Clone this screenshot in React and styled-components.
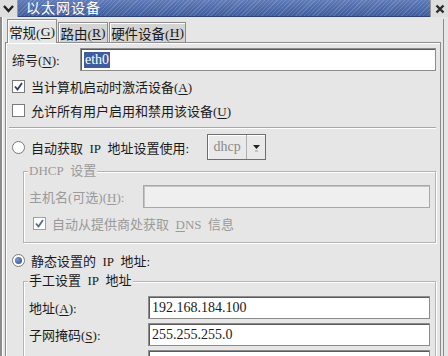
import React from "react";
import styled, { createGlobalStyle } from "styled-components";

const GlobalStyle = createGlobalStyle`
  html, body { margin: 0; padding: 0; background: #e6e6e6; }
  body { font-family: "Liberation Serif", "Noto Sans CJK SC", serif; }
`;

const Window = styled.div`
  width: 448px;
  height: 356px;
  overflow: hidden;
  background: #e6e6e6;
  font-size: 13px;
  color: #1a1a1a;
  display: flex;
  flex-direction: column;
`;

const TitleBar = styled.div`
  height: 17px;
  display: flex;
  flex: none;
`;

const TitleButton = styled.div`
  width: 17px;
  height: 17px;
  background: #dedede;
  border-right: 1px solid #9a9a9a;
  display: flex;
  align-items: center;
  justify-content: center;
  flex: none;
  ${(p) => p.right && "border-right: none; border-left: 1px solid #9a9a9a;"}
`;

const TitleText = styled.div`
  flex: 1;
  color: #fff;
  font-size: 14px;
  line-height: 17px;
  padding-left: 8px;
  background:
    repeating-linear-gradient(
      135deg,
      rgba(255, 255, 255, 0.14) 0 1px,
      rgba(0, 0, 0, 0) 1px 3px
    ),
    linear-gradient(180deg, #5f7bb8 0%, #3f5c9c 100%);
  border-bottom: 1px solid #2e4478;
  letter-spacing: 1px;
`;

const Frame = styled.div`
  flex: 1;
  display: flex;
  border-left: 2px solid #8c8c8c;
  box-shadow: inset 1px 0 0 #fff;
  padding: 2px 4px 0 3px;
`;

const Content = styled.div`
  flex: 1;
  display: flex;
  flex-direction: column;
  border-right: 1px solid #8c8c8c;
  padding-right: 2px;
`;

const Tabs = styled.div`
  display: flex;
  align-items: flex-end;
  padding-left: 2px;
  height: 23px;
  position: relative;
  z-index: 1;
`;

const Tab = styled.div`
  height: ${(p) => (p.active ? "24px" : "20px")};
  margin-bottom: ${(p) => (p.active ? "-1px" : "0")};
  width: ${(p) => p.w}px;
  box-sizing: border-box;
  background: ${(p) => (p.active ? "#e6e6e6" : "#d4d4d4")};
  border: 1px solid #8c8c8c;
  border-bottom: none;
  box-shadow: inset 1px 1px 0 #fff;
  display: flex;
  align-items: center;
  justify-content: center;
  font-size: 13.5px;
  margin-right: 1px;
`;

const Panel = styled.div`
  flex: 1;
  border: 1px solid #8c8c8c;
  border-bottom: none;
  box-shadow: inset 1px 1px 0 #fff;
  padding: 5px 4px 0 6px;
  display: flex;
  flex-direction: column;
`;

const Row = styled.div`
  display: flex;
  align-items: center;
  height: ${(p) => p.h || 24}px;
  gap: ${(p) => p.gap || 6}px;
  margin-top: ${(p) => p.mt || 0}px;
  padding-left: ${(p) => p.pl || 0}px;
  color: ${(p) => (p.disabled ? "#9a9a9a" : "inherit")};
`;

const Label = styled.span`
  width: ${(p) => p.w}px;
  flex: none;
  white-space: nowrap;
`;

const Field = styled.div`
  flex: 1;
  height: 23px;
  box-sizing: border-box;
  border: 1px solid #8c8c8c;
  box-shadow: inset 1px 1px 0 #5a5a5a;
  background: ${(p) => (p.disabled ? "#efefef" : "#fff")};
  display: flex;
  align-items: center;
  padding-left: 3px;
  font-size: 14px;
  ${(p) => p.disabled && "box-shadow: inset 1px 1px 0 #c4c4c4; border-color: #a8a8a8;"}
`;

const Selected = styled.span`
  background: #3f5c9c;
  color: #fff;
  padding: 0 1px;
`;

const U = styled.u`
  text-underline-offset: 2px;
`;

const Box = styled.span`
  width: 13px;
  height: 13px;
  box-sizing: border-box;
  background: #fff;
  border: 1px solid #7a7a7a;
  flex: none;
  display: flex;
  align-items: center;
  justify-content: center;
  border-radius: ${(p) => (p.round ? "50%" : "0")};
  ${(p) => p.dim && "border-color: #a0a0a0;"}
`;

const Dot = styled.span`
  width: 7px;
  height: 7px;
  border-radius: 50%;
  background: radial-gradient(circle at 35% 35%, #7c96d0, #2c4a8c);
`;

const Separator = styled.div`
  height: 0;
  border-top: 1px solid #a8a8a8;
  border-bottom: 1px solid #fff;
  margin: 5px 0 5px -3px;
`;

const Combo = styled.div`
  margin-left: 12px;
  display: flex;
  height: 26px;
  box-sizing: border-box;
  border: 1px solid #6e6e6e;
  box-shadow: inset 1px 1px 0 #fff;
  background: #e9e9e9;
`;

const ComboText = styled.span`
  width: 38px;
  display: flex;
  align-items: center;
  justify-content: center;
  color: #8a8a8a;
  border-right: 1px solid #b0b0b0;
  font-size: 14px;
`;

const ComboArrow = styled.span`
  width: 18px;
  display: flex;
  align-items: center;
  justify-content: center;
`;

const Group = styled.div`
  margin: ${(p) => p.mt}px 0 0 11px;
  border: 1px solid #b4b4b4;
  border-bottom: ${(p) => (p.open ? "none" : "1px solid #b4b4b4")};
  box-shadow: inset 1px 1px 0 #fff, 1px 1px 0 #fff;
  padding: 6px 5px 4px 5px;
  position: relative;
  height: ${(p) => (p.h ? `${p.h}px` : "auto")};
  box-sizing: border-box;
`;

const Legend = styled.span`
  position: absolute;
  top: -9px;
  left: 4px;
  background: #e6e6e6;
  padding: 0 1px;
  color: ${(p) => (p.disabled ? "#9a9a9a" : "inherit")};
  line-height: 16px;
`;

const Check = ({ color = "#2c3e6a" }) => (
  <svg width="9" height="9" viewBox="0 0 9 9">
    <path d="M1 4.5 L3.5 7.5 L8 1" fill="none" stroke={color} strokeWidth="1.8" />
  </svg>
);

export default function App() {
  return (
    <Window>
      <GlobalStyle />
      <TitleBar>
        <TitleButton>
          <svg width="11" height="8" viewBox="0 0 11 8">
            <path d="M1 1 L5.5 6 L10 1" fill="none" stroke="#1e1e1e" strokeWidth="2.4" />
          </svg>
        </TitleButton>
        <TitleText>以太网设备</TitleText>
        <TitleButton right>
          <svg width="10" height="10" viewBox="0 0 10 10">
            <path d="M1.5 1.5 L8.5 8.5 M8.5 1.5 L1.5 8.5" stroke="#2a2a2a" strokeWidth="2.4" />
          </svg>
        </TitleButton>
      </TitleBar>
      <Frame>
        <Content>
          <Tabs>
            <Tab active w={50}>常规(<U>G</U>)</Tab>
            <Tab w={50}>路由(<U>R</U>)</Tab>
            <Tab w={77}>硬件设备(<U>H</U>)</Tab>
          </Tabs>
          <Panel>
            <Row h={23} gap={0}>
              <Label w={62}>缔号(<U>N</U>):</Label>
              <Field><Selected>eth0</Selected></Field>
            </Row>
            <Row h={24} mt={3}>
              <Box><Check /></Box>
              <span>当计算机启动时激活设备(<U>A</U>)</span>
            </Row>
            <Row h={24}>
              <Box />
              <span>允许所有用户启用和禁用该设备(<U>U</U>)</span>
            </Row>
            <Separator />
            <Row h={26}>
              <Box round />
              <span>自动获取 &nbsp;IP&nbsp; 地址设置使用:</span>
              <Combo>
                <ComboText>dhcp</ComboText>
                <ComboArrow>
                  <svg width="9" height="9" viewBox="0 0 9 9">
                    <path d="M1 2 L8 2 L4.5 6 Z" fill="#222" />
                    <path d="M3 8 L6 8" stroke="#999" strokeWidth="1" />
                  </svg>
                </ComboArrow>
              </Combo>
            </Row>
            <Group h={72} mt={11}>
              <Legend disabled>DHCP&nbsp; 设置</Legend>
              <Row h={24} gap={0} disabled mt={6}>
                <Label w={108}>主机名(可选)(<U>H</U>):</Label>
                <Field disabled />
              </Row>
              <Row h={24} disabled mt={3} pl={4}>
                <Box dim><Check color="#5a6a8a" /></Box>
                <span>自动从提供商处获取 &nbsp;<U>D</U>NS&nbsp; 信息</span>
              </Row>
            </Group>
            <Row h={24} mt={5}>
              <Box round><Dot /></Box>
              <span>静态设置的 &nbsp;IP&nbsp; 地址:</span>
            </Row>
            <Group open mt={9}>
              <Legend>手工设置 &nbsp;IP&nbsp; 地址</Legend>
              <Row h={23} gap={0} mt={8}>
                <Label w={113}>地址(<U>A</U>):</Label>
                <Field>192.168.184.100</Field>
              </Row>
              <Row h={23} gap={0} mt={4}>
                <Label w={113}>子网掩码(<U>S</U>):</Label>
                <Field>255.255.255.0</Field>
              </Row>
              <Row h={23} gap={0} mt={4}>
                <Label w={113}>默认网关地址:</Label>
                <Field />
              </Row>
            </Group>
          </Panel>
        </Content>
      </Frame>
    </Window>
  );
}
